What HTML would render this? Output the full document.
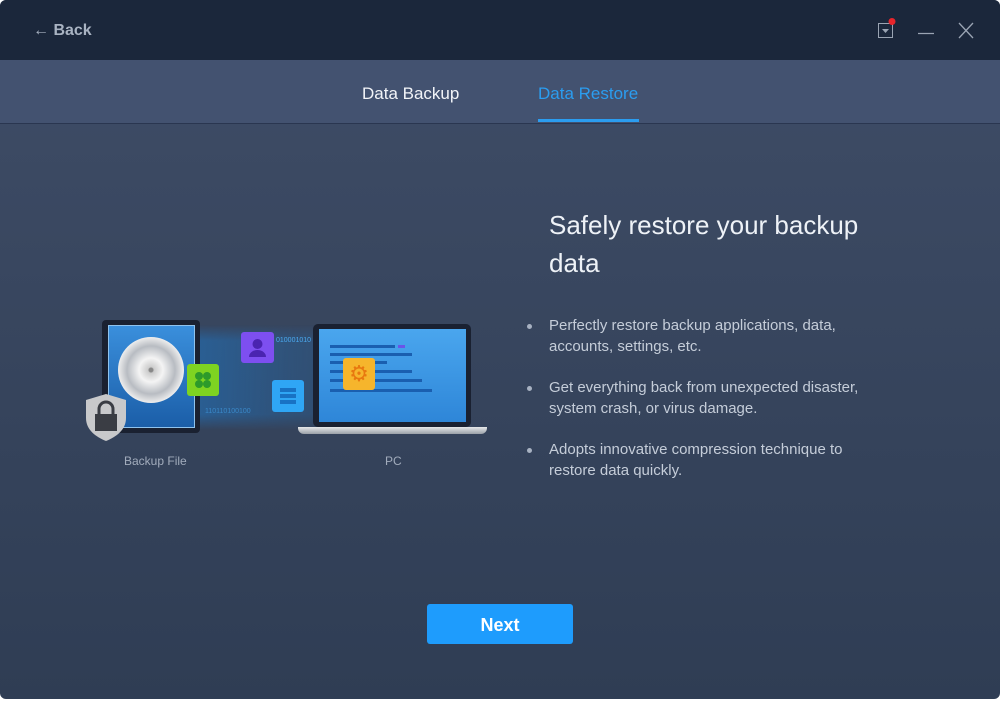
<!DOCTYPE html>
<html><head><meta charset="utf-8"><style>
*{margin:0;padding:0;box-sizing:border-box}
html,body{width:1000px;height:701px;background:#fff;overflow:hidden;font-family:"Liberation Sans",sans-serif}
.win{position:absolute;left:0;top:0;width:1000px;height:699px;border-radius:6px;overflow:hidden;background:linear-gradient(#3f4d67,#2f3d54)}
.top{position:absolute;left:0;top:0;width:1000px;height:60px;background:#1b273b}
.back{position:absolute;left:33px;top:22px;color:#a9b3c2;font-size:16px;font-weight:bold}
.tabs{position:absolute;left:0;top:60px;width:1000px;height:64px;background:#435270;border-bottom:1px solid #2a3650}
.tab{position:absolute;top:24px;font-size:17px}
.ul{position:absolute;left:538px;top:119px;width:101px;height:3px;background:#2b9df0}
h1{position:absolute;left:549px;top:206px;font-weight:normal;color:#eef2f7;font-size:26px;line-height:38px;width:340px}
ul.b{position:absolute;left:549px;top:315px;list-style:none;color:#c5cdd9;font-size:15px;line-height:21px;width:340px}
ul.b li{position:relative;margin-bottom:20px}
ul.b li:before{content:"";position:absolute;left:-22px;top:9px;width:5px;height:5px;border-radius:50%;background:#a8b2c2}
.btn{position:absolute;left:427px;top:604px;width:146px;height:40px;background:#1e9cfd;border-radius:3px;color:#fff;font-size:18px;text-align:center;line-height:42px;font-weight:bold}
.lbl{position:absolute;top:454px;color:#a2acbc;font-size:12px}
</style></head><body>
<div class="win">
<div class="top">
<div class="back">&#8592; Back</div>
<svg style="position:absolute;left:876px;top:18px" width="105" height="24">
<rect x="2.5" y="5.5" width="14" height="14" fill="none" stroke="#9aa4b3"/>
<path d="M6 11h7l-3.5 4z" fill="#9aa4b3"/>
<circle cx="16" cy="3.5" r="3.5" fill="#e8252b"/>
<line x1="42" y1="15.5" x2="58" y2="15.5" stroke="#9aa4b3" stroke-width="1.2"/>
<path d="M83 5l14 15M97 5L83 20" stroke="#9aa4b3" stroke-width="1.3"/>
</svg>
</div>
<div class="tabs">
<div class="tab" style="left:362px;color:#f2f4f8">Data Backup</div>
<div class="tab" style="left:538px;color:#2b9df0">Data Restore</div>
</div>
<div class="ul"></div>

<div style="position:absolute;left:200px;top:325px;width:240px;height:105px;background:linear-gradient(90deg,rgba(30,120,200,.5),rgba(30,120,200,.25) 40%,rgba(30,120,200,0));-webkit-mask:linear-gradient(transparent,#000 15%,#000 85%,transparent)"></div>
<div style="position:absolute;left:102px;top:320px;width:98px;height:113px;background:#1a2131;border-radius:4px"></div>
<div style="position:absolute;left:108px;top:325px;width:87px;height:103px;background:linear-gradient(#3a8fdc,#1b5ea8);border:1px solid #8fc3ee"></div>
<div style="position:absolute;left:118px;top:337px;width:66px;height:66px;border-radius:50%;background:radial-gradient(circle,#888 0 2px,#ccc 3px,#f4f4f4 12px,#b8bcc2 24px,#eee 33px)"></div>
<svg style="position:absolute;left:84px;top:392px" width="44" height="50"><path d="M22 2L42 8V26C42 38 32 45 22 49C12 45 2 38 2 26V8Z" fill="#c8c9cb"/><rect x="11" y="22" width="22" height="17" fill="#3a3d44"/><path d="M15 22v-5a7 7 0 0 1 14 0v5" fill="none" stroke="#3a3d44" stroke-width="3"/></svg>
<div style="position:absolute;left:241px;top:332px;width:33px;height:31px;background:#7d4ff0;border-radius:3px"><svg width="33" height="31"><circle cx="16.5" cy="12" r="5" fill="#4a24b0"/><path d="M8 25a8.5 7 0 0 1 17 0z" fill="#4a24b0"/></svg></div>
<div style="position:absolute;left:187px;top:364px;width:32px;height:32px;background:#7ed321;border-radius:3px"><svg width="32" height="32"><g fill="#2d9a2a"><circle cx="12" cy="12" r="4"/><circle cx="20" cy="12" r="4"/><circle cx="12" cy="20" r="4"/><circle cx="20" cy="20" r="4"/></g></svg></div>
<div style="position:absolute;left:272px;top:380px;width:32px;height:32px;background:#2fa6f5;border-radius:3px"><svg width="32" height="32"><g fill="#1872c4"><rect x="8" y="8" width="16" height="4"/><rect x="8" y="14" width="16" height="4"/><rect x="8" y="20" width="16" height="4"/></g></svg></div>
<div style="position:absolute;left:276px;top:337px;font-size:7px;color:#4aa9ef">010001010</div>
<div style="position:absolute;left:205px;top:408px;font-size:7px;color:#3a88c8">110110100100</div>
<div style="position:absolute;left:313px;top:324px;width:158px;height:103px;background:#1a2131;border-radius:5px"></div>
<div style="position:absolute;left:319px;top:329px;width:147px;height:93px;background:linear-gradient(#4aa6ee,#2e86d8)"></div>
<div style="position:absolute;left:330px;top:345px;width:65px;height:3px;background:#1a5fb0"></div>
<div style="position:absolute;left:398px;top:345px;width:7px;height:3px;background:#6a55e8"></div>
<div style="position:absolute;left:330px;top:353px;width:82px;height:3px;background:#1a5fb0"></div>
<div style="position:absolute;left:330px;top:361px;width:57px;height:3px;background:#1a5fb0"></div>
<div style="position:absolute;left:330px;top:370px;width:82px;height:3px;background:#1a5fb0"></div>
<div style="position:absolute;left:330px;top:379px;width:92px;height:3px;background:#1a5fb0"></div>
<div style="position:absolute;left:330px;top:389px;width:102px;height:3px;background:#1a5fb0"></div>
<div style="position:absolute;left:343px;top:358px;width:32px;height:32px;background:#f6b52c;border-radius:3px;text-align:center;line-height:32px;color:#e8780f;font-size:22px">&#9881;</div>
<div style="position:absolute;left:298px;top:427px;width:189px;height:7px;background:linear-gradient(#e6e8ea,#9aa0a8);border-radius:0 0 6px 6px"></div>
<div class="lbl" style="left:124px">Backup File</div>
<div class="lbl" style="left:385px">PC</div>

<h1>Safely restore your backup data</h1>
<ul class="b">
<li>Perfectly restore backup applications, data, accounts, settings, etc.</li>
<li>Get everything back from unexpected disaster, system crash, or virus damage.</li>
<li>Adopts innovative compression technique to restore data quickly.</li>
</ul>
<div class="btn">Next</div>
</div>
</body></html>
